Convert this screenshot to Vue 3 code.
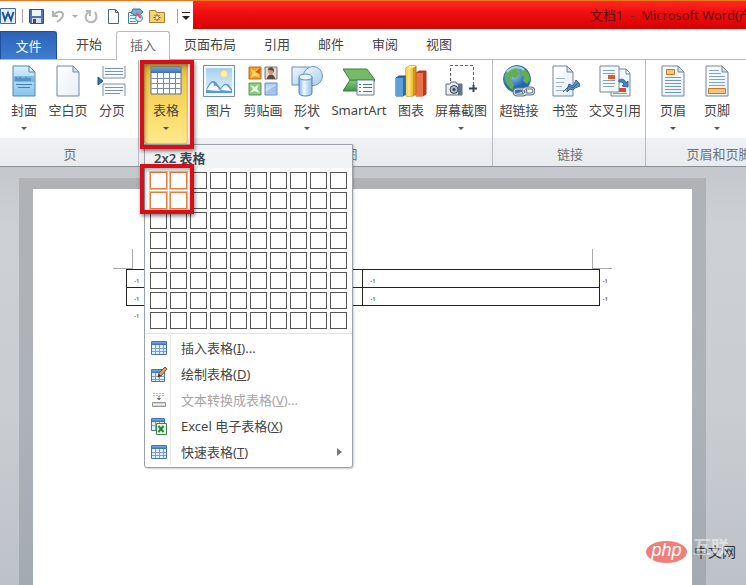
<script setup>
import { ref } from 'vue'

const tabs = ['开始', '插入', '页面布局', '引用', '邮件', '审阅', '视图']
const activeTab = ref('插入')
const cols = 10
const rows = 8
const picked = ref({ c: 2, r: 2 })

const isPicked = (n) => (n - 1) % cols < picked.value.c && Math.floor((n - 1) / cols) < picked.value.r
const pick = (n) => {
  picked.value = { c: ((n - 1) % cols) + 1, r: Math.floor((n - 1) / cols) + 1 }
}

const sheet = '<path d="M5 1h16l6 6v24H5z" fill="url(#g-paper)" stroke="#71879d"/><path d="M21 1v6h6z" fill="#d5e2ee" stroke="#71879d"/>'

const icons = {
  cover: '<path d="M5 1h16l6 6v24H5z" fill="url(#g-cover)" stroke="#4f88b5"/><path d="M21 1v6h6z" fill="#e4f3fc" stroke="#4f88b5"/><path d="M6 11h20v6H6z" fill="#7ab8e3"/><path d="M8 12v4M10 13v3M12 12v4m2-3v3m2-3v3m2-4v4m2-3v3m2-3v3" stroke="#326ea5"/><path d="M8 19.500h16M10 22.500h12" stroke="#3c7fb4"/>',
  blank: sheet,
  pagebreak: '<path d="M7 1v12h22V1M7 31V19h22v12" fill="#f8fbfd" stroke="#8093a5"/><path d="M9 3.500h18M9 6.500h18M9 9.500h18M9 22.500h18M9 25.500h18M9 28.500h15" stroke="#7c93ac"/><path d="M2 12l5 4-5 4z" fill="#356fb2" stroke="#24548f"/>',
  table: '<path d="M1 2h30v27H1z" fill="#fff" stroke="#536f94"/><path d="M1 2h30v6H1z" fill="url(#g-blue)"/><path d="M1.500 13.500h29M1.500 18.500h29M1.500 23.500h29M7.500 8v21M13.500 8v21M19.500 8v21M25.500 8v21" stroke="#718ba8"/>',
  picture: '<path d="M.5.5h31v31H.5z" fill="#f3faff" stroke="#6b90ac"/><path d="M3 3h26v26H3z" fill="url(#g-sky)"/><circle cx="21" cy="9" r="3.500" fill="#fff1b4" stroke="#f9d56c"/><path d="M3 25c3-7 5-9 7-9 4 0 5 5 8 7 1-3 4-5 6-4 2 0 3 3 5 5v4H3z" fill="#5e99ce"/><path d="M4 25c3-4 4-7 6-7 1 3 0 4 3 3l4 5M18 25c2-4 4-5 6-4l4 5" fill="#fff" stroke="#e4f3ff"/>',
  clip: '<path d="M2 2h12v12H2z" fill="#f59925" stroke="#b96a28"/><path d="M4 4l4 2 4-3-1 5 2 4-5-1-4 2 1-5z" fill="#ffdc51"/><path d="M8 7l5-4v6z" fill="#e2532b"/><path d="M18 2h12v12H18z" fill="#dad8df" stroke="#827171"/><circle cx="24" cy="6" r="3" fill="#d99563"/><path d="M20 14c0-6 8-6 8 0M21 5c0-4 7-4 6 2-2-2-4-2-6-2" fill="#62483e"/><path d="M2 18h12v12H2z" fill="#8fc980" stroke="#5c9c55"/><path d="M3 20l5 2 4-3-2 5 3 4-6-2-4 2 3-4z" fill="#eaf7dc"/><path d="M18 18h12v12H18z" fill="url(#g-sky)" stroke="#648cc4"/><path d="M18 27l12-7v10H18z" fill="#769ee0" opacity=".5"/>',
  shapes: '<path d="M1 2h17v18H1z" fill="url(#g-light)" stroke="#5d8cbc"/><circle cx="22" cy="11" r="9.500" fill="url(#g-light)" stroke="#6999c5"/><path d="M8 12v16c0 4 13 4 13 0V12z" fill="url(#g-tube)" stroke="#4b82b8"/><ellipse cx="14.500" cy="12" rx="6.500" ry="3" fill="#eaf5ff" stroke="#5b91c4"/>',
  smart: '<path d="M0 26l7-11h25l-7 11z" fill="url(#g-green)" stroke="#3b7d3e"/><path d="M0 4h24l8 11H7z" fill="#74bb68" stroke="#438044"/><path d="M14 15h17v15H14z" fill="#f7fafe" stroke="#697d91"/><path d="M16 19.500h2m2 0h9M16 22.500h2m2 0h9M16 26.500h2m2 0h9" stroke="#526e92"/>',
  chart: '<path d="M1 13l3-2h7v18l-3 2H1z" fill="#2f69ad" stroke="#265487"/><path d="M1 13h7v18H1z" fill="#5d9fd9"/><path d="M21 8l3-2h7v23l-3 2h-7z" fill="#b93b22" stroke="#a43825"/><path d="M21 8h7v23h-7z" fill="#ef7047"/><path d="M11 3l3-2h7v28l-3 2h-7z" fill="#d29a16" stroke="#a97619"/><path d="M11 3h7v28h-7z" fill="url(#g-gold)"/><path d="M11 3l3-2h7l-3 2z" fill="#ffe795"/>',
  shot: '<path d="M5.500 16V.5h23v20" fill="none" stroke="#59616d" stroke-dasharray="3 2"/><path d="M24 23.500h8M28.500 20v7" stroke="#3b4857" stroke-width="2"/><path d="M1 19h4l1-2h5l1 2h5v11H1z" fill="#e9edf1" stroke="#5d6e80"/><path d="M13 19h4v11h-4z" fill="#647488"/><circle cx="9" cy="24.500" r="4" fill="#aebdca" stroke="#33485c"/><circle cx="9" cy="24.500" r="1.500" fill="#2d4052"/>',
  globe: '<circle cx="14" cy="14" r="13.500" fill="url(#g-globe)" stroke="#3979aa"/><path d="M3 8c3-5 8-7 12-6l-1 4 3 2-4 5-4-1-2 4 4 3-1 6c-6-3-9-9-7-17zM19 3c5 2 8 6 8 12l-3 4-4-3 1-4-4-3z" fill="#63ae51"/><path d="M4 7c5-6 13-6 17-2" fill="none" stroke="#b9e2ef" opacity=".8" stroke-width="2"/><g fill="none" stroke="#657683" stroke-width="3"><rect x="11" y="24" width="12" height="6" rx="3"/><rect x="20" y="23" width="11" height="6" rx="3"/></g><g fill="none" stroke="#dce4ea"><rect x="11" y="24" width="12" height="6" rx="3"/><rect x="20" y="23" width="11" height="6" rx="3"/></g>',
  bookmark: '<path d="M4 1h14l6 6v24H4z" fill="url(#g-paper)" stroke="#71879d"/><path d="M18 1v6h6z" fill="#d5e2ee" stroke="#71879d"/><path d="M7 13.500h9M7 17.500h8M7 21.500h6M7 25.500h11" stroke="#9fb2c6"/><path d="M18 25l2-6 4 2 3-6 3 3 1 3-5 2-2 2-3-1-3 3z" fill="#5b91c7" stroke="#34699f"/><path d="M14 27l6-6 4 2 5-5" fill="none" stroke="#31659a"/>',
  cross: '<path d="M12 4h15l4 4v23H12z" fill="#f3f7fb" stroke="#71879d"/><path d="M27 4v5h4" fill="none" stroke="#71879d"/><path d="M20 23h7v4h-7z" fill="#d34e28"/><path d="M14 28.500h14" stroke="#7e9fbe"/><path d="M1 1h19v26H1z" fill="#f8fbfe" stroke="#71879d"/><path d="M4 5.500h12M4 8.500h12M4 15.500h12M4 18.500h12M4 21.500h11" stroke="#7fa0bf"/><path d="M9 10h7v4H9z" fill="#d65b2c"/><path d="M20 15c4-2 6 0 7 3l2-2v6l-6-1 2-2c-1-2-3-2-5-2z" fill="#4387c5" stroke="#2b659f"/>',
  header: sheet + '<path d="M9.500 4.500h8v5h-8z" fill="#f8c581" stroke="#c67824"/><path d="M8 12.500h16M8 15.500h16M8 18.500h16M8 21.500h16M8 24.500h16M8 27.500h16" stroke="#7496bd"/>',
  footer: sheet + '<path d="M8 5.500h10M8 8.500h12M8 11.500h16M8 14.500h16M8 17.500h16M8 20.500h16" stroke="#84a3c4"/><path d="M7.500 23.500h17v5h-17z" fill="#f8c581" stroke="#c67824"/>'
}

const small = {
  grid: '<path d="M.5 1.500h15v13H.5z" fill="#e3effb" stroke="#4474ad"/><path d="M1 2h14v3H1z" fill="url(#g-blue)"/><path d="M1 8.500h14M1 11.500h14M4.500 5v9M8.500 5v9M12.500 5v9" stroke="#77a0cb"/>',
  draw: '<path d="M.5 3.500h13v12H.5z" fill="#e3effb" stroke="#4474ad"/><path d="M1 4h12v3H1z" fill="url(#g-blue)"/><path d="M1 10.500h12M1 13.500h12M4.500 7v8M8.500 7v8" stroke="#77a0cb"/><path d="M7 11l1-4 6-6 2 2-6 7z" fill="#dca163" stroke="#795331"/><path d="M7 11l1-3 2 2z" fill="#303030"/>',
  convert: '<path d="M2 1.500h12M2 3.500h12" stroke="#b9b9b9" stroke-dasharray="2 1"/><path d="M8 4v4M6.500 6.500h3L8 8z" fill="#757575" stroke="#757575"/><path d="M1.500 10.500h13v4h-13z" fill="#d1d1d1" stroke="#999"/><path d="M2 12.500h12" stroke="#f3f3f3"/>',
  excel: '<path d="M.5.5h13v12H.5z" fill="#e3effb" stroke="#4474ad"/><path d="M1 1h12v3H1z" fill="url(#g-blue)"/><path d="M1 7.500h12M4.500 4v8M8.500 4v8" stroke="#77a0cb"/><path d="M5.500 5.500h10v11h-10z" fill="#e7f5e4" stroke="#388642"/><path d="M7.500 8l5 6M12.500 8l-5 6" stroke="#28833a" stroke-width="2"/>',
  word: '<path d="M.5.5h15v15H.5z" fill="#e7f1fb" stroke="#3d6eaa"/><path d="M2.500 4l2.500 8 3-7 3 7 2.500-8" fill="none" stroke="#1f55a5" stroke-width="2"/>',
  save: '<path d="M1.500 1.500h14v14h-13l-1-1z" fill="#5272b8" stroke="#34488e"/><path d="M4 2h9v6H4z" fill="#eef3fb"/><path d="M4 10h9v5H4z" fill="#d9dfea"/><path d="M5 11h3v4H5z" fill="#34488e"/>',
  undo: '<path d="M3 3v5h5M3 8c4-6 10-5 10-1 0 3-3 5-6 7" fill="none" stroke="#b1b3b6" stroke-width="2"/>',
  redo: '<path d="M3 3h4v5M6 4c-5 3-4 9 1 10 6 1 8-5 5-10" fill="none" stroke="#b4b6b9" stroke-width="2"/>',
  page: '<path d="M3.500 1.500h7l3 3v11h-10z" fill="#fff" stroke="#50647c"/><path d="M10.500 1.500v3h3" fill="none" stroke="#50647c"/>',
  review: '<path d="M1.500 4.500h9v11h-9z" fill="#eef6fc" stroke="#4b7ba9"/><path d="M3 7.500h6M3 10.500h6M3 13.500h6" stroke="#519ed2"/><path d="M4 5l2-4h7l3 3-5 5z" fill="#77add5" stroke="#456b95"/><circle cx="12" cy="10" r="3.500" fill="#dceffc" stroke="#4587bd"/><path d="M9 5l5 5" stroke="#d45d60" stroke-width="2"/>',
  folder: '<path d="M.5 2.500h6l1 2h8v10H.5z" fill="#f5d273" stroke="#a97d2c"/><path d="M8 6v7M4.500 9.500h7M5.500 7l5 5M10.500 7l-5 5" stroke="#5b5338"/><circle cx="8" cy="9.500" r="1.500" fill="#fff3a8"/>'
}

const groups = [
  { name: '页', cls: 'pages', items: [
    { t: '封面', i: 'cover', d: true }, { t: '空白页', i: 'blank' }, { t: '分页', i: 'pagebreak' }] },
  { name: '', cls: 'tables', items: [{ t: '表格', i: 'table', d: true, on: true }] },
  { name: '插图', cls: 'art', items: [
    { t: '图片', i: 'picture' }, { t: '剪贴画', i: 'clip' }, { t: '形状', i: 'shapes', d: true },
    { t: 'SmartArt', i: 'smart', w: 'w60' }, { t: '图表', i: 'chart' }, { t: '屏幕截图', i: 'shot', d: true, w: 'w56' }] },
  { name: '链接', cls: 'links', items: [
    { t: '超链接', i: 'globe', w: 'w48' }, { t: '书签', i: 'bookmark' }, { t: '交叉引用', i: 'cross', w: 'w56' }] },
  { name: '页眉和页脚', cls: 'edges', items: [
    { t: '页眉', i: 'header', d: true }, { t: '页脚', i: 'footer', d: true }] }
]

const menu = [
  { t: '插入表格', k: 'I', e: '...', i: 'grid' },
  { t: '绘制表格', k: 'D', e: '', i: 'draw' },
  { t: '文本转换成表格', k: 'V', e: '...', i: 'convert', off: true },
  { t: 'Excel 电子表格', k: 'X', e: '', i: 'excel' },
  { t: '快速表格', k: 'T', e: '', i: 'grid', sub: true }
]
</script>

<template>
  <div class="app">
    <svg class="defs" aria-hidden="true">
      <defs>
        <linearGradient id="g-paper" x2="1" y2="1"><stop stop-color="#fff" /><stop offset="1" stop-color="#e6eff7" /></linearGradient>
        <linearGradient id="g-cover" x2="0" y2="1"><stop stop-color="#d9effb" /><stop offset="1" stop-color="#87c4ea" /></linearGradient>
        <linearGradient id="g-blue" x2="0" y2="1"><stop stop-color="#7fabe0" /><stop offset="1" stop-color="#3a6cb5" /></linearGradient>
        <linearGradient id="g-sky" x2="0" y2="1"><stop stop-color="#a5cff0" /><stop offset="1" stop-color="#e6f5ff" /></linearGradient>
        <linearGradient id="g-light" x2="1" y2="1"><stop stop-color="#f3f9ff" /><stop offset="1" stop-color="#a8cbea" /></linearGradient>
        <linearGradient id="g-tube"><stop stop-color="#84b5e4" /><stop offset=".4" stop-color="#eff8ff" /><stop offset="1" stop-color="#8dbce8" /></linearGradient>
        <linearGradient id="g-green" x2="0" y2="1"><stop stop-color="#8acb7e" /><stop offset="1" stop-color="#42954a" /></linearGradient>
        <linearGradient id="g-gold"><stop stop-color="#f8c63b" /><stop offset=".4" stop-color="#ffe884" /><stop offset="1" stop-color="#eeb42b" /></linearGradient>
        <radialGradient id="g-globe" cx=".35" cy=".3"><stop stop-color="#a5d9f4" /><stop offset="1" stop-color="#2369b0" /></radialGradient>
      </defs>
    </svg>

    <header class="titlebar">
      <div class="quick">
        <button class="q" aria-label="Word"><svg viewBox="0 0 17 17" v-html="small.word" /></button>
        <i class="bar" />
        <button class="q" aria-label="保存"><svg viewBox="0 0 17 17" v-html="small.save" /></button>
        <button class="q" aria-label="撤消"><svg viewBox="0 0 17 17" v-html="small.undo" /></button>
        <i class="caret pale" />
        <button class="q" aria-label="重复"><svg viewBox="0 0 17 17" v-html="small.redo" /></button>
        <button class="q" aria-label="新建"><svg viewBox="0 0 17 17" v-html="small.page" /></button>
        <button class="q" aria-label="审阅"><svg viewBox="0 0 17 17" v-html="small.review" /></button>
        <button class="q" aria-label="打开"><svg viewBox="0 0 17 17" v-html="small.folder" /></button>
        <span class="end-tools">
          <i class="bar" />
          <button class="more" aria-label="自定义"><i class="caret" /></button>
        </span>
      </div>
      <h1 class="title"><span>文档1&nbsp; - &nbsp;Microsoft Word(产品激活失败)</span></h1>
    </header>

    <nav class="tabs">
      <button class="file">文件</button>
      <button v-for="t in tabs" :key="t" class="tab" :class="{ active: t === activeTab }" @click="activeTab = t">{{ t }}</button>
    </nav>

    <section class="ribbon">
      <div v-for="g in groups" :key="g.cls" class="group" :class="g.cls">
        <div class="tools">
          <button v-for="b in g.items" :key="b.t" class="tool" :class="[b.w, { on: b.on }]">
            <svg class="icon" viewBox="0 0 32 32" v-html="icons[b.i]" />
            <span>{{ b.t }}</span>
            <i v-if="b.d" class="caret" />
          </button>
        </div>
        <div class="caption">{{ g.name }}</div>

        <template v-if="g.cls === 'tables'">
          <div class="dropdown">
            <div class="head">{{ picked.c }}x{{ picked.r }} 表格</div>
            <div class="cells">
              <button v-for="n in cols * rows" :key="n" class="cell" :class="{ hot: isPicked(n) }" :aria-label="`${n}`" @click="pick(n)" />
            </div>
            <div class="menu">
              <button v-for="m in menu" :key="m.t" class="entry" :disabled="m.off">
                <span class="gutter"><svg viewBox="0 0 17 17" v-html="small[m.i]" /></span>
                <span class="text">{{ m.t }}(<u>{{ m.k }}</u>){{ m.e }}</span>
                <i v-if="m.sub" class="sub" />
              </button>
            </div>
          </div>
          <div class="frame frame-tool" />
          <div class="frame frame-cells" />
        </template>
      </div>
    </section>

    <main class="workspace">
      <div class="shade">
        <article class="page">
          <div class="corners"><i /><i /></div>
          <table class="doc">
            <colgroup><col /><col /><col class="end" /></colgroup>
            <tbody>
              <tr v-for="r in 2" :key="r"><td>.₁</td><td>.₁</td><td class="mark">.₁</td></tr>
            </tbody>
          </table>
          <p class="para">.₁</p>
        </article>
      </div>
    </main>

    <div class="watermark">
      <span class="ghost">互联</span>
      <span class="php">php</span>
      <span class="site">中文网</span>
    </div>
  </div>
</template>

<style>
body { margin: 0; }
</style>

<style scoped>
.app {
  position: relative;
  display: flex;
  flex-direction: column;
  height: 100vh;
  overflow: hidden;
  font: 13px/18px "Noto Sans", "Noto Sans CJK SC", sans-serif;
  color: #444;
  background: #fff;
}
.defs { position: absolute; width: 0; height: 0; }
button { font: inherit; color: inherit; padding: 0; margin: 0; border: 0; background: none; white-space: nowrap; }
svg { display: block; }

.titlebar { display: flex; height: 28px; flex: none; border-top: 1px solid #e87722; margin-bottom: 1px; }
.quick { display: flex; align-items: center; flex: none; gap: 5px; width: 193px; padding-top: 2px; box-sizing: border-box; }
.q { width: 17px; height: 17px; flex: none; }
.quick .bar { width: 1px; height: 14px; background: #a5a5a5; }
.quick .caret.pale { border-top-color: #aaa; }
.end-tools { display: flex; align-items: center; gap: 4px; flex: 1; justify-content: flex-end; padding-right: 3px; }
.more { border-top: 1px solid #222; padding-top: 3px; }
.caret { display: block; width: 0; height: 0; border: 3px solid transparent; border-top-color: #555; border-bottom: 0; }
.more .caret { border-width: 4px 4px 0; border-top-color: #222; }
.title {
  flex: 1;
  display: flex;
  justify-content: flex-end;
  min-width: 0;
  margin: 0;
  font: inherit;
  line-height: 28px;
  color: #650808;
  white-space: nowrap;
  background: linear-gradient(#ff2a1c, #f01010 40%, #d40202);
}
.title span { width: 156px; overflow: hidden; }

.tabs { display: flex; height: 29px; flex: none; border-bottom: 1px solid #b6babf; }
.file {
  width: 57px;
  margin: 1px 5px 0 0;
  color: #fff;
  background: linear-gradient(#2b62b8, #3f7dd0);
  border: 1px solid #1f4f9c;
  border-bottom: 0;
  border-radius: 0 3px 0 0;
}
.tab { padding: 0 13px 2px; border: 1px solid transparent; border-bottom: 0; }
.tab.active { margin: 1px 0 -1px; background: #fff; border-color: #b6babf; border-radius: 3px 3px 0 0; color: #666; }

.ribbon { display: flex; flex: none; height: 106px; border-bottom: 1px solid #8b9097; background: linear-gradient(#fff 78px, #eff1f4 78px, #e9ecef); }
.group { position: relative; display: flex; flex-direction: column; flex: none; box-sizing: border-box; border-right: 1px solid #b9bdc3; }
.pages { width: 139px; padding-left: 2px; }
.tables { width: 57px; padding-left: 5px; border-right: 0; z-index: 2; }
.art { width: 297px; padding-left: 1px; }
.links { width: 153px; padding-left: 2px; }
.edges { width: 142px; padding-left: 5px; }
.tools { display: flex; height: 83px; }
.tool { display: flex; flex-direction: column; align-items: center; flex: none; width: 44px; height: 82px; margin-top: 2px; padding-top: 3px; }
.tool span { margin: 4px 0 8px; }
.w48 { width: 48px; }
.w56 { width: 56px; }
.w60 { width: 60px; }
.tool.on { background: linear-gradient(#d9a83a, #f3c94c 20%, #fadb68 60%, #ffe98c); border-radius: 3px; box-shadow: inset 0 0 2px #9b7a2c; }
.icon { width: 32px; height: 32px; flex: none; }
.caption { text-align: center; color: #6b7178; line-height: 22px; }

.dropdown {
  position: absolute;
  left: 5px;
  top: 84px;
  width: 207px;
  background: #fff;
  border: 1px solid #9da2a8;
  border-radius: 0 0 3px 3px;
  box-shadow: 1px 1px 2px rgba(0, 0, 0, .2);
}
.head { height: 23px; padding-left: 9px; line-height: 26px; font-weight: 600; color: #3c4754; background: #f1f3f5; }
.cells { display: grid; grid-template-columns: repeat(10, 17px); grid-auto-rows: 17px; gap: 3px; padding: 4px 5px; }
.cell { border: 1px solid #555; background: #fff; }
.cell.hot { border-color: #e07f42; box-shadow: 0 0 0 1px #f5b98e; }
.menu { border-top: 1px solid #dfe1e4; padding: 1px 0 2px; }
.entry { display: flex; align-items: center; width: 100%; height: 26px; text-align: left; }
.entry:disabled { color: #a5a5a5; }
.gutter { display: flex; align-items: center; align-self: stretch; width: 26px; padding-left: 6px; box-sizing: border-box; border-right: 1px solid #e3e5e8; }
.gutter svg { width: 17px; height: 17px; flex: none; }
.text { flex: 1; padding-left: 10px; }
.sub { border: 4px solid transparent; border-left: 5px solid #777; border-right: 0; margin-right: 10px; }

.frame { position: absolute; left: 1px; width: 54px; box-sizing: border-box; border: 4px solid #d5101a; box-shadow: 1px 2px 4px rgba(0, 0, 0, .5), inset 1px 2px 4px rgba(0, 0, 0, .35); pointer-events: none; }
.frame-tool { top: 0; height: 89px; }
.frame-cells { top: 104px; height: 50px; }

.workspace { display: flex; flex: 1; min-height: 0; padding: 11px 40px 0 19px; background: linear-gradient(#c4c7cb, #cdd1d6 60px, #c9cdd2 60%, #bdc2c8); }
.shade { flex: 1; display: flex; padding: 11px 14px 0; background: linear-gradient(#b0b2b6, #adb2b9 60%, #a4aab2); }
.page { flex: 1; padding: 60px 80px 0; background: #fff; }
.corners { display: flex; justify-content: space-between; }
.corners i { width: 19px; height: 19px; border: 0 solid #aaa; border-width: 0 1px 1px 0; }
.corners i + i { border-width: 0 0 1px 1px; }
.doc { width: calc(100% - 13px); margin-left: 13px; table-layout: fixed; border-collapse: collapse; }
.doc .end { width: 13px; }
.doc td { height: 17px; padding: 0 0 0 7px; border: 1px solid #222; font-size: 8px; line-height: 16px; color: #333; }
.doc td.mark { border-width: 0 0 0 1px; padding-left: 3px; }
.para { margin: 0 0 0 21px; font-size: 8px; line-height: 16px; }

.watermark { position: absolute; right: 10px; bottom: 22px; display: flex; align-items: center; gap: 7px; }
.php { width: 41px; height: 22px; border-radius: 50%; background: #ee7f7c; color: #fff; font: italic 18px/19px "Liberation Sans", sans-serif; text-align: center; }
.site { font-size: 14px; color: #333; }
.ghost { position: absolute; right: 7px; bottom: 3px; font-size: 18px; line-height: 26px; font-weight: 700; color: #fff; opacity: .5; }
</style>
